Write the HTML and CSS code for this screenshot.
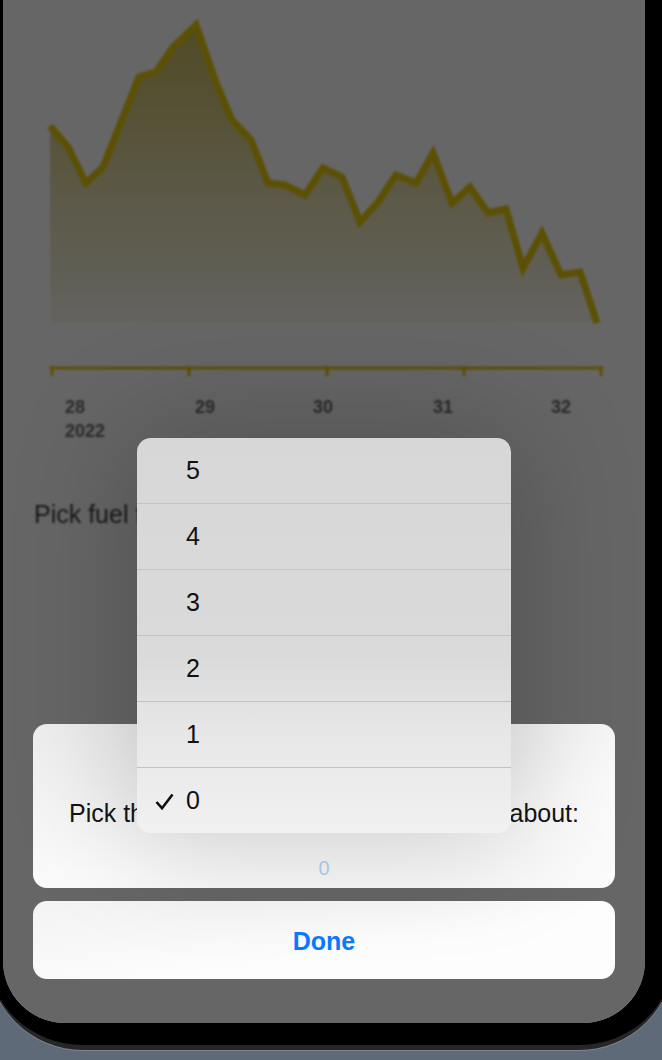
FILE: index.html
```html
<!DOCTYPE html>
<html>
<head>
  <title>Fuel prices</title>
  <link rel="stylesheet" href="styles.css">
</head>
<body>
  <div class="phone">
    <div class="screen">
      <div class="app">
        <svg class="chart" viewBox="3 0 642 450" width="642" height="450">
          <defs>
            <linearGradient id="areaFill" x1="0" y1="0" x2="0" y2="1">
              <stop offset="0" stop-color="#b4a020" stop-opacity="0.72"/>
              <stop offset="1" stop-color="#b4a020" stop-opacity="0.08"/>
            </linearGradient>
          </defs>
          <polygon fill="url(#areaFill)" points="50,126 68,147 86,183 103,167 139,77 156,72 173,47 196,25 215,80 232,120 251,140 268,183 285,185 305,195 323,168 342,177 360,222 378,202 396,175 416,183 433,153 452,203 470,187 488,213 506,209 523,268 542,233 561,275 580,272 597,323 50,323"/>
          <polyline class="line" points="50,126 68,147 86,183 103,167 139,77 156,72 173,47 196,25 215,80 232,120 251,140 268,183 285,185 305,195 323,168 342,177 360,222 378,202 396,175 416,183 433,153 452,203 470,187 488,213 506,209 523,268 542,233 561,275 580,272 597,323"/>
          <g class="axis">
            <line x1="50" y1="368" x2="603" y2="368"/>
            <line x1="52" y1="366" x2="52" y2="376"/>
            <line x1="189" y1="366" x2="189" y2="376"/>
            <line x1="327" y1="366" x2="327" y2="376"/>
            <line x1="464" y1="366" x2="464" y2="376"/>
            <line x1="601" y1="366" x2="601" y2="376"/>
          </g>
          <g class="ticks">
            <text x="65" y="413">28</text>
            <text x="65" y="437">2022</text>
            <text x="195" y="413">29</text>
            <text x="313" y="413">30</text>
            <text x="433" y="413">31</text>
            <text x="551" y="413">32</text>
          </g>
        </svg>
        <p class="prompt">Pick fuel type</p>
      </div>

      <div class="dim"></div>

      <div class="sheet">
        <div class="card">
          <p class="card-title">Pick the number of fuel stations to hear about:</p>
          <p class="card-value">0</p>
        </div>
        <button class="done">Done</button>
      </div>

      <ul class="menu">
        <li>5</li>
        <li>4</li>
        <li>3</li>
        <li>2</li>
        <li>1</li>
        <li class="checked">
          <svg class="check" viewBox="0 0 19 17" width="19" height="17">
            <polyline points="1.5,9 7,15.2 17.5,1.5"/>
          </svg>
          0
        </li>
      </ul>
    </div>
  </div>
</body>
</html>
```

FILE: styles.css
```css
body {
  margin: 0;
  height: 1060px;
  overflow: hidden;
  background: #5f6a79;
  font-family: "Liberation Sans", Arial, sans-serif;
}

.phone {
  box-sizing: border-box;
  width: 686px;
  height: 1050px;
  margin-left: -12px;
  padding: 0 29px 22px 15px;
  background: #000;
  border-bottom: 5px solid #262626;
  border-radius: 0 0 95px 95px;
  box-shadow: 0 1px 0 #80858c;
}

.screen {
  position: relative;
  display: grid;
  height: 100%;
  overflow: hidden;
  background: #fff;
  border-radius: 0 0 62px 62px;
}

/* all layers share the same cell, stacked by z-index */
.screen > .app,
.screen > .dim,
.screen > .sheet {
  grid-area: 1 / 1;
}

.app {
  z-index: 0;
  filter: blur(1px);
}

.dim {
  z-index: 1;
  background: rgba(0, 0, 0, 0.6);
}

.sheet {
  z-index: 2;
}

.chart {
  display: block;
}

.chart .line {
  fill: none;
  stroke: #e6c80c;
  stroke-width: 7;
  stroke-linejoin: miter;
  stroke-miterlimit: 3;
}

.chart .axis line {
  stroke: #e6c80c;
  stroke-width: 3;
}

.chart .ticks text {
  font-family: "Liberation Sans", Arial, sans-serif;
  font-size: 18px;
  font-weight: 700;
  fill: #6a6a6a;
}

.prompt {
  margin: 49px 0 0 31px;
  font-size: 25px;
  line-height: 30px;
  color: #3a3a3a;
}

.sheet {
  display: flex;
  flex-direction: column;
  justify-content: flex-end;
  gap: 13px;
  padding: 0 30px 44px;
}

.card {
  padding: 74px 20px 8px;
  border-radius: 14px;
  background: linear-gradient(170deg, #eeeeee, #fbfbfb 60%);
  text-align: center;
}

.card-title {
  margin: 0;
  font-size: 25px;
  line-height: 30px;
  color: #141414;
  white-space: nowrap;
}

.card-value {
  margin: 28px 0 0;
  font-size: 20px;
  line-height: 24px;
  color: #b6d3f3;
}

.done {
  height: 78px;
  padding: 3px 0 0;
  border: none;
  border-radius: 14px;
  background: linear-gradient(170deg, #f3f3f3, #fdfdfd 60%);
  font-family: inherit;
  font-size: 25px;
  font-weight: 700;
  line-height: 75px;
  color: #0a7aff;
}

.menu {
  position: absolute;
  z-index: 3;
  left: 134px;
  top: 438px;
  width: 374px;
  margin: 0;
  padding: 0;
  list-style: none;
  border-radius: 14px;
  overflow: hidden;
  background: linear-gradient(#d7d7d7 0%, #dadada 55%, #e7e7e7 75%, #f1f1f1 100%);
  box-shadow: 0 0 120px 10px rgba(0, 0, 0, 0.2);
}

.menu li {
  position: relative;
  height: 65px;
  padding-left: 49px;
  font-size: 25px;
  line-height: 65px;
  color: #111;
}

.menu li + li {
  border-top: 1px solid #c3c3c3;
}

.check {
  position: absolute;
  left: 18px;
  top: 25px;
}

.check polyline {
  fill: none;
  stroke: #111;
  stroke-width: 2.6;
}
```
